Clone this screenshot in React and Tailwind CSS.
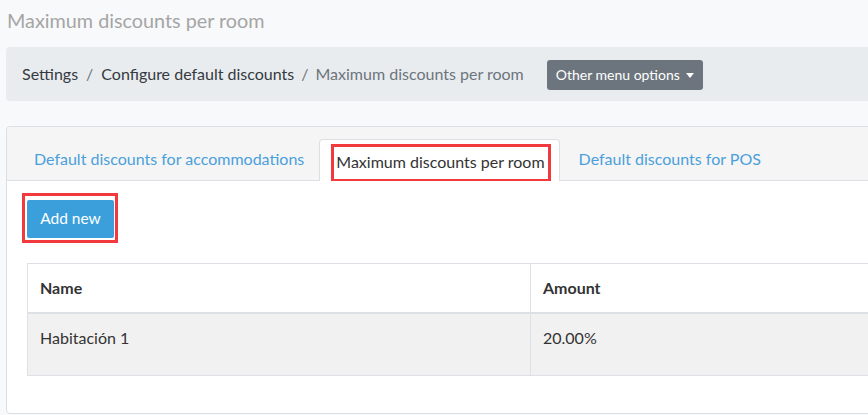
import React from 'react';

const tabs = [
    { label: 'Default discounts for accommodations', active: false },
    { label: 'Maximum discounts per room', active: true },
    { label: 'Default discounts for POS', active: false },
];

const rows = [{ name: 'Habitación 1', amount: '20.00%' }];

export default function App() {
    return (
        <div className="min-h-[415px] w-full overflow-hidden bg-[#f8f9fa] font-['Lato','Open_Sans',sans-serif] text-[16px] text-[#333]">
            <div className="w-[900px]">
                {/* page title */}
                <h1 className="h-[40px] pl-[7px] pt-[7px] text-[19.8px] leading-[26px] text-[#a5a5a5]">
                    Maximum discounts per room
                </h1>

                {/* breadcrumb */}
                <div className="ml-[6px] mt-[7px] flex h-[54px] items-center rounded-[4px] bg-[#e9ecef] pl-[16px]">
                    <nav className="flex items-center text-[16px] text-[#343a40]">
                        <span>Settings</span>
                        <span className="px-[8px] text-[#6c757d]">/</span>
                        <span>Configure default discounts</span>
                        <span className="px-[7px] text-[#6c757d]">/</span>
                        <span className="text-[#6c757d]">Maximum discounts per room</span>
                    </nav>
                    <button className="ml-[23px] mt-[1px] flex h-[30px] items-center gap-[6px] rounded-[3px] bg-[#6c757d] px-[9px] text-[14px] text-white">
                        Other menu options
                        <span className="mt-[1px] border-x-[4px] border-t-[5px] border-x-transparent border-t-white" />
                    </button>
                </div>

                {/* card */}
                <div className="ml-[6px] mt-[25px] h-[288px] rounded-[4px] border border-[#dcdfe3] bg-white">
                    {/* tabs */}
                    <div className="flex h-[54px] items-end rounded-t-[4px] border-b border-[#dcdfe3] bg-[#f5f5f5] pl-[12px]">
                        {tabs.map(tab =>
                            tab.active ? (
                                <div
                                    key={tab.label}
                                    className="-mb-px mr-[4px] flex h-[42px] items-end rounded-t-[4px] border border-b-0 border-[#dcdfe3] bg-white pl-[11px] pr-[8px]"
                                >
                                    <span className="flex h-[37px] items-center border-[3px] border-b-[2px] border-[#f2393d] pb-[3px] pl-[2px] pr-[3px] text-[16px] text-[#333]">
                                        {tab.label}
                                    </span>
                                </div>
                            ) : (
                                <div
                                    key={tab.label}
                                    className="flex h-[42px] items-center px-[15px] text-[16px] text-[#4aa0dc]"
                                >
                                    {tab.label}
                                </div>
                            )
                        )}
                    </div>

                    {/* body */}
                    <div className="px-[20px] pt-[12px]">
                        <div className="-ml-[5px] inline-block border-[3px] border-[#f2393d] pb-[2px] pl-[2px] pr-[1px] pt-[4px]">
                            <button className="flex h-[38px] w-[87px] items-center justify-center rounded-[2px] bg-[#3a9fdb] text-[15.5px] text-white">
                                Add new
                            </button>
                        </div>

                        <table className="mt-[20px] w-[900px] border-collapse text-left">
                            <thead>
                                <tr className="h-[49px] border-y border-b-2 border-[#dde1e6]">
                                    <th className="w-[503px] border-l border-r border-[#dde1e6] px-[12px] font-bold">Name</th>
                                    <th className="px-[12px] font-bold">Amount</th>
                                </tr>
                            </thead>
                            <tbody>
                                {rows.map(row => (
                                    <tr key={row.name} className="h-[62px] border-b border-[#dde1e6] bg-[#f1f1f1]">
                                        <td className="border-l border-r border-[#dde1e6] px-[12px] pb-[25px] pt-[12px] align-top">
                                            {row.name}
                                        </td>
                                        <td className="px-[12px] pb-[25px] pt-[12px] align-top">{row.amount}</td>
                                    </tr>
                                ))}
                            </tbody>
                        </table>
                    </div>
                </div>
            </div>
        </div>
    );
}
